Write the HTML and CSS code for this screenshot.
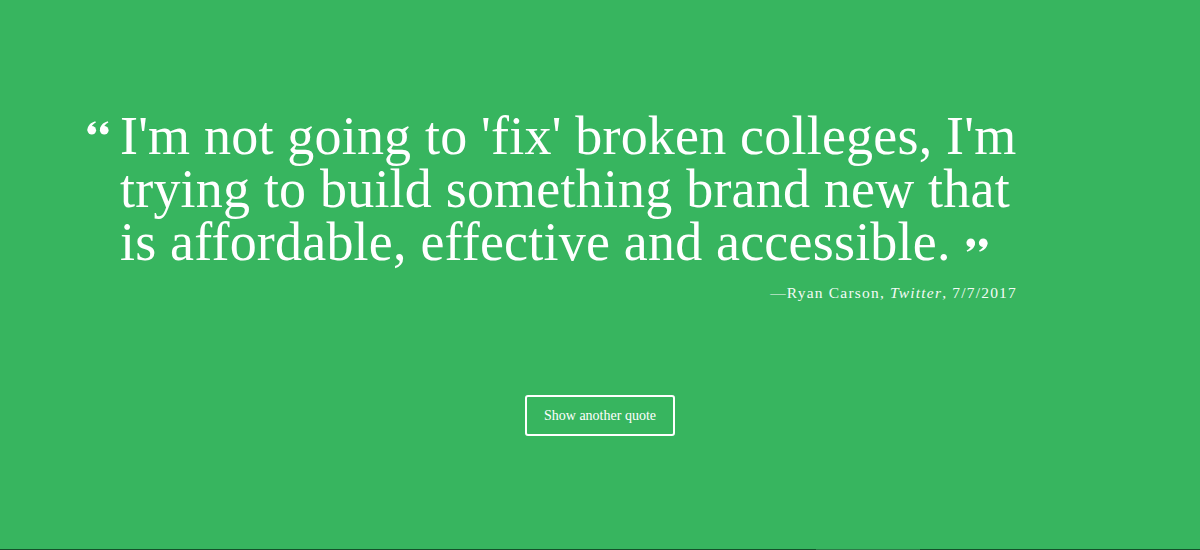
FILE: index.html
```html
<!DOCTYPE html>
<html lang="en">
<head>
<meta charset="utf-8">
<title>Random Quote</title>
<link rel="stylesheet" href="styles.css">
</head>
<body>
<main class="page">
  <section class="quote-box">
    <div class="quote">
      <svg class="mark mark-open" viewBox="0 0 24 14" aria-hidden="true">
        <g fill="#ffffff">
          <circle cx="5" cy="9.3" r="4.5"/>
          <path d="M0.5 9.6 C0.5 4.8 3.4 1.6 8.6 0 L9.3 1.3 C6.6 2.7 5.1 4.4 4.9 6 Z"/>
          <circle cx="18" cy="9.3" r="4.5"/>
          <path d="M13.5 9.6 C13.5 4.8 16.4 1.6 21.6 0 L22.3 1.3 C19.6 2.7 18.1 4.4 17.9 6 Z"/>
        </g>
      </svg>
      <div class="quote-body">
        <p class="quote-text">I'm not going to 'fix' broken colleges, I'm trying to build something brand new that is affordable, effective and accessible.<svg class="mark mark-close" viewBox="0 0 24 14" aria-hidden="true">
          <g fill="#ffffff" transform="rotate(180 12 7)">
            <circle cx="5" cy="9.3" r="4.5"/>
            <path d="M0.5 9.6 C0.5 4.8 3.4 1.6 8.6 0 L9.3 1.3 C6.6 2.7 5.1 4.4 4.9 6 Z"/>
            <circle cx="18" cy="9.3" r="4.5"/>
            <path d="M13.5 9.6 C13.5 4.8 16.4 1.6 21.6 0 L22.3 1.3 C19.6 2.7 18.1 4.4 17.9 6 Z"/>
          </g>
        </svg></p>
        <p class="attribution">&mdash;Ryan Carson, <em>Twitter</em>, 7/7/2017</p>
      </div>
    </div>
  </section>
  <div class="actions">
    <button class="btn" type="button">Show another quote</button>
  </div>
</main>
<div class="scrollbar"></div>
</body>
</html>
```
FILE: styles.css
```css
* { box-sizing: border-box; }
html, body { margin: 0; padding: 0; }
body {
  background: #37b55f;
  color: #ffffff;
  font-family: "Liberation Serif", "DejaVu Serif", serif;
  height: 550px;
  overflow: hidden;
}
.page {
  height: 549px;
  padding-top: 110px;
}
.quote-box {
  padding-left: 87px;
}
.quote {
  display: flex;
  align-items: flex-start;
  gap: 10px;
}
.mark {
  display: inline-block;
  width: 23px;
  height: 14px;
}
.mark-open {
  flex: none;
  margin-top: 11px;
}
.mark-close {
  margin-left: 14px;
  vertical-align: 8px;
}
.quote-body {
  width: 915px;
}
.quote-text {
  margin: 0;
  font-size: 54px;
  line-height: 53px;
  letter-spacing: 0.2px;
}
.attribution {
  margin: 15px 0 0;
  padding-right: 18px;
  text-align: right;
  font-size: 15.5px;
  letter-spacing: 1.2px;
  color: #f4fbf6;
}
.actions {
  display: flex;
  justify-content: center;
  margin-top: 93px;
}
.btn {
  width: 150px;
  height: 41px;
  background: transparent;
  border: 2px solid #ffffff;
  border-radius: 3px;
  color: #ffffff;
  font-family: "Liberation Serif", serif;
  font-size: 14px;
  cursor: pointer;
}
.scrollbar {
  height: 1px;
  background: linear-gradient(to right, #14502a 0, #14502a 816px, #2d7a48 816px, #2d7a48 920px, #14502a 920px);
}
```
